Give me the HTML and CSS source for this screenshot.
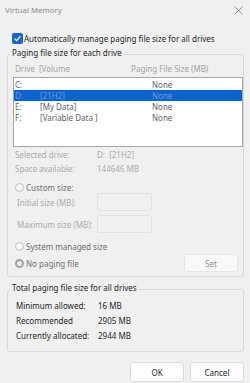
FILE: index.html
```html
<!DOCTYPE html>
<html lang="en">
<head>
    <meta charset="UTF-8">
    <title>Virtual Memory</title>
    <link rel="stylesheet" href="styles.css">
</head>
<body>
    <div class="window">
        <div class="titlebar">
            <span class="title">Virtual Memory</span>
            <svg class="close" width="9" height="9" viewBox="0 0 9 9">
                <path d="M0.5 0.5 L8.5 8.5 M8.5 0.5 L0.5 8.5" stroke="#8a8a8a" stroke-width="0.9" fill="none"/>
            </svg>
        </div>

        <div class="auto">
            <span class="check">
                <svg width="11" height="11" viewBox="0 0 11 11">
                    <path d="M2.6 5.6 L4.6 7.6 L8.4 3.4" stroke="#fff" stroke-width="1.2" fill="none"/>
                </svg>
            </span>
            <span>Automatically manage paging file size for all drives</span>
        </div>

        <fieldset class="group drives">
            <legend>Paging file size for each drive</legend>

            <div class="list-head">
                <span>Drive&nbsp;&nbsp;[Volume</span>
                <span class="head-size">Paging File Size (MB)</span>
            </div>

            <div class="listbox">
                <div class="row"><span>C:</span><span></span><span>None</span></div>
                <div class="row selected"><span>D:</span><span>[21H2]</span><span>None</span></div>
                <div class="row"><span>E:</span><span>[My Data]</span><span>None</span></div>
                <div class="row"><span>F:</span><span>[Variable Data ]</span><span>None</span></div>
            </div>

            <div class="info">
                <span>Selected drive:</span><span>D:&nbsp;&nbsp;[21H2]</span>
                <span>Space available:</span><span>144646 MB</span>
            </div>

            <div class="radio-row custom">
                <span class="radio"></span>
                <span>Custom size:</span>
            </div>
            <div class="size-field">
                <span>Initial size (MB):</span>
                <span class="input"></span>
            </div>
            <div class="size-field">
                <span>Maximum size (MB):</span>
                <span class="input"></span>
            </div>

            <div class="radio-row system">
                <span class="radio"></span>
                <span>System managed size</span>
            </div>
            <div class="radio-row nopaging">
                <span class="radio on"></span>
                <span>No paging file</span>
                <button class="btn set">Set</button>
            </div>
        </fieldset>

        <fieldset class="group totals">
            <legend>Total paging file size for all drives</legend>
            <div class="totals-grid">
                <span>Minimum allowed:</span><span>16 MB</span>
                <span>Recommended</span><span>2905 MB</span>
                <span>Currently allocated:</span><span>2944 MB</span>
            </div>
        </fieldset>

        <div class="actions">
            <button class="btn">OK</button>
            <button class="btn">Cancel</button>
        </div>
    </div>
</body>
</html>
```

FILE: styles.css
```css
body {
    margin: 0;
    background: #f0f0f0;
    font-family: "Noto Sans", "Open Sans", sans-serif;
    font-size: 8px;
    color: #1f1f1f;
}
.window {
    width: 250px;
    height: 383px;
    overflow: hidden;
}
.titlebar {
    height: 20px;
    display: flex;
    align-items: center;
    justify-content: space-between;
    padding: 0 7px 0 5px;
}
.title {
    color: #8a8a8a;
    font-size: 7.8px;
    line-height: 20px;
}
.auto {
    display: flex;
    align-items: center;
    gap: 1px;
    height: 12px;
    margin: 12px 0 0 12px;
}
.check {
    width: 11px;
    height: 11px;
    background: #1b66c9;
    border-radius: 2px;
    display: flex;
}
.group {
    margin: 3px 0 0 7px;
    width: 237px;
    box-sizing: border-box;
    border: 1px solid #d9d9d9;
    border-radius: 3px;
    padding: 0 0 4px 5px;
    min-width: 0;
}
.group legend {
    padding: 0 2px 2px;
    margin-left: -3px;
    line-height: 12px;
    color: #262626;
}
.list-head {
    display: flex;
    height: 12px;
    line-height: 12px;
    margin-top: 2px;
    padding-left: 2px;
    color: #a3a3a3;
}
.head-size {
    margin-left: 61px;
}
.listbox {
    margin-top: 2px;
    height: 70px;
    box-sizing: border-box;
    background: #fff;
    border: 1px solid #a6a6a6;
    padding-top: 1px;
}
.row {
    display: grid;
    grid-template-columns: 25px 112px 1fr;
    height: 11px;
    line-height: 11px;
    padding-left: 1px;
    color: #5f5f5f;
}
.row.selected {
    background: #0a64d0;
    color: #6f9ad6;
}
.info {
    display: grid;
    grid-template-columns: 82px 1fr;
    grid-auto-rows: 14px;
    line-height: 14px;
    margin-top: 1px;
    padding-left: 2px;
    color: #ababab;
}
.radio-row {
    display: flex;
    align-items: center;
    gap: 2px;
    padding-left: 2px;
    height: 12px;
    color: #6e6e6e;
}
.radio-row.custom {
    margin-top: 5px;
}
.radio-row.system {
    margin-top: 7px;
}
.radio-row.nopaging {
    margin-top: 2px;
    height: 18px;
}
.radio {
    width: 9px;
    height: 9px;
    box-sizing: border-box;
    border-radius: 50%;
    border: 1px solid #bdbdbd;
    background: #f7f7f7;
}
.radio.on {
    border: 2.5px solid #a3a3a3;
    background: #ececec;
}
.size-field {
    display: grid;
    grid-template-columns: 80px 55px;
    align-items: center;
    height: 18px;
    padding-left: 4px;
    color: #ababab;
}
.size-field + .size-field {
    margin-top: 4px;
}
.input {
    height: 18px;
    box-sizing: border-box;
    border: 1px solid #e2e2e2;
    border-radius: 2px;
    background: #f0f0f0;
}
.btn {
    font-family: inherit;
    font-size: 8px;
    height: 20px;
    width: 54px;
    background: #fdfdfd;
    border: 1px solid #dcdcdc;
    border-radius: 3px;
    color: #1f1f1f;
    padding: 0;
}
.btn.set {
    margin-left: auto;
    margin-right: 5px;
    height: 18px;
    color: #8c8c8c;
    background: #f9f9f9;
    border-color: #e6e6e6;
}
.totals {
    margin-top: 5px;
    padding-bottom: 8px;
}
.totals-grid {
    display: grid;
    grid-template-columns: 82px 1fr;
    grid-auto-rows: 15px;
    line-height: 15px;
    margin-top: 2px;
    padding-left: 3px;
    color: #262626;
}
.actions {
    display: flex;
    justify-content: flex-end;
    gap: 6px;
    margin: 10px 6px 0 0;
}
```
